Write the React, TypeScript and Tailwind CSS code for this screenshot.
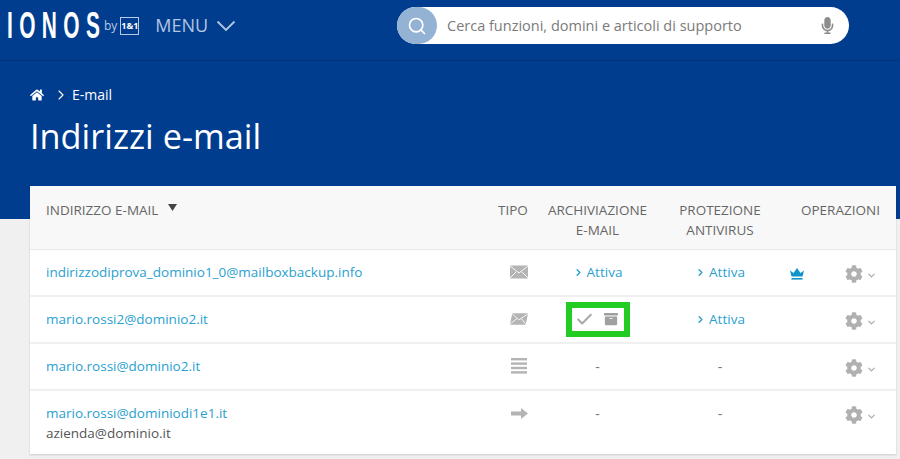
import { Check, ChevronDown, ChevronRight, Search } from "lucide-react";
import { FaArchive, FaCog, FaHome, FaMicrophone } from "react-icons/fa";

const sans = "font-['Open_Sans',sans-serif]";
const rowGrid = "grid grid-cols-[450px_60px_115px_130px_111px]";

function Envelope({ tilted }: { tilted?: boolean }) {
  return (
    <svg width="18" height="14" viewBox="0 0 18 14" className={tilted ? "-skew-x-12 scale-90" : ""}>
      <rect width="18" height="13" y="0.5" fill="#b4b4b4" />
      <path d="M0 1l9 7 9-7M0 13l6.5-6.5M18 13l-6.5-6.5" fill="none" stroke="#fff" strokeWidth="0.9" />
    </svg>
  );
}

function Lines() {
  return (
    <svg width="16" height="16" viewBox="0 0 16 16" fill="#b4b4b4">
      <rect y="0" width="16" height="2.4" />
      <rect y="4.4" width="16" height="2.4" />
      <rect y="8.8" width="16" height="2.4" />
      <rect y="13.2" width="16" height="2.4" />
    </svg>
  );
}

function Arrow() {
  return (
    <svg width="17" height="11" viewBox="0 0 17 11" fill="#b4b4b4">
      <path d="M0 3.5h10V0l7 5.5-7 5.5V7.5H0z" />
    </svg>
  );
}

function Crown() {
  return (
    <svg width="14" height="12" viewBox="0 0 14 12" fill="#0f94c9">
      <path d="M0 2.5l3.5 2.5L7 0l3.5 5L14 2.5 12.5 8.5h-11z" />
      <rect x="1.5" y="10" width="11" height="1.6" />
    </svg>
  );
}

function Attiva() {
  return (
    <span className="flex items-center justify-center gap-[3px] text-[13.5px] text-[#2a9fd0]">
      <ChevronRight size={11} strokeWidth={3} />
      Attiva
    </span>
  );
}

function Ops({ crown }: { crown?: boolean }) {
  return (
    <div className="flex items-center pl-[5px] pt-[3px]">
      <div className="w-[7px]">{crown ? <Crown /> : null}</div>
      <FaCog className="ml-[48px] text-[#b0b0b0]" size={18} />
      <ChevronDown className="ml-[3px] mt-[2px] text-[#a8a8a8]" size={11} strokeWidth={2.5} />
    </div>
  );
}

function Dash() {
  return <span className="text-center text-[14px] text-[#777]">-</span>;
}

const rows = [
  {
    email: "indirizzodiprova_dominio1_0@mailboxbackup.info",
    icon: <Envelope />,
    arch: <Attiva />,
    prot: <Attiva />,
    crown: true,
    h: "h-[47px]",
  },
  {
    email: "mario.rossi2@dominio2.it",
    icon: <Envelope tilted />,
    arch: (
      <div className="flex justify-center">
        <div className="flex h-[35px] w-[64px] items-center justify-center gap-[10px] border-[6px] border-[#22cc22] bg-white">
          <Check className="-ml-[2px] text-[#a9a9a9]" size={19} strokeWidth={2.6} />
          <FaArchive className="text-[#a0a0a0]" size={14} />
        </div>
      </div>
    ),
    prot: <Attiva />,
    h: "h-[47px]",
  },
  {
    email: "mario.rossi@dominio2.it",
    icon: <Lines />,
    arch: <Dash />,
    prot: <Dash />,
    h: "h-[47px]",
  },
  {
    email: "mario.rossi@dominiodi1e1.it",
    alias: "azienda@dominio.it",
    icon: <Arrow />,
    arch: <Dash />,
    prot: <Dash />,
    h: "h-[63px]",
  },
];

export default function App() {
  return (
    <div className={`h-[459px] w-[900px] overflow-hidden bg-[#f0f0f0] ${sans}`}>
      <div className="h-[219px] bg-[#003d8f]">
        {/* top bar */}
        <div className="flex h-[61px] items-center border-b border-[#02337a] pb-[9px]">
          <div className="flex w-[397px] shrink-0 items-center">
            <span className="ml-[7px] w-[92px] origin-left scale-x-[0.58] whitespace-nowrap font-['Liberation_Sans',sans-serif] text-[36px] font-bold leading-none tracking-[11px] text-white">
              IONO<span className="tracking-normal">S</span>
            </span>
            <span className="ml-[5px] text-[12px] text-[#b9cbe4]">by</span>
            <span className="ml-[3px] flex h-[18px] w-[19px] items-center justify-center border border-[#b9cbe4] text-[9px] font-bold text-white">
              1&1
            </span>
            <span className="ml-[16px] text-[18px] font-medium text-[#b3c6e0]">MENU</span>
            <svg width="20" height="12" viewBox="0 0 20 12" className="ml-[8px]" fill="none" stroke="#b3c6e0" strokeWidth="1.8">
              <path d="M1.5 1.5L10 10l8.5-8.5" />
            </svg>
          </div>
          <div className="flex h-[37px] w-[452px] items-center rounded-full bg-white">
            <div className="flex h-[37px] w-[40px] items-center justify-center rounded-full bg-[#94b2d3]">
              <Search className="text-white" size={20} strokeWidth={2} />
            </div>
            <span className="ml-[10px] text-[14.5px] text-[#7b7b7b]">Cerca funzioni, domini e articoli di supporto</span>
            <FaMicrophone className="ml-auto mr-[13px] text-[#8c8c8c]" size={17} />
          </div>
        </div>
        {/* title */}
        <div className="pl-[30px] pt-[24px]">
          <div className="flex items-center text-[14px] leading-[20px] text-white">
            <FaHome size={14} />
            <ChevronRight className="ml-[9px]" size={16} strokeWidth={1.6} />
            <span className="ml-[3px]">E-mail</span>
          </div>
          <h1 className="mt-[8px] text-[34.3px] font-normal leading-[46px] text-white">Indirizzi e-mail</h1>
        </div>
      </div>

      {/* table card */}
      <div className="ml-[30px] mt-[-33px] w-[866px] bg-white shadow-[0_1px_2px_rgba(0,0,0,0.15)]">
        <div className={`${rowGrid} h-[64px] border-b border-[#e8e8e8] bg-[#f8f8f8] pt-[14px] text-[13.5px] leading-[20px] text-[#666]`}>
          <div className="flex pl-[16px]">
            INDIRIZZO E-MAIL
            <svg width="9" height="7" viewBox="0 0 9 7" className="ml-[10px] mt-[4px]" fill="#444">
              <path d="M0 0h9L4.5 7z" />
            </svg>
          </div>
          <div className="pl-[18px]">TIPO</div>
          <div className="text-center">
            ARCHIVIAZIONE
            <br />
            E-MAIL
          </div>
          <div className="text-center">
            PROTEZIONE
            <br />
            ANTIVIRUS
          </div>
          <div className="pl-[16px]">OPERAZIONI</div>
        </div>
        {rows.map((r) => (
          <div key={r.email} className={`${rowGrid} ${r.h} border-b-2 border-[#f0f0f0] pt-[12px] last:border-b-0`}>
            <div className="pl-[16px] text-[13.5px] leading-[20px] text-[#2a9fd0]">
              {r.email}
              {r.alias ? <div className="text-[#555]">{r.alias}</div> : null}
            </div>
            <div className="flex h-[20px] items-center justify-center pl-[18px]">{r.icon}</div>
            <div className="flex h-[20px] flex-col justify-center">{r.arch}</div>
            <div className="flex h-[20px] flex-col justify-center">{r.prot}</div>
            <div className="h-[20px]">
              <Ops crown={r.crown} />
            </div>
          </div>
        ))}
      </div>
    </div>
  );
}
